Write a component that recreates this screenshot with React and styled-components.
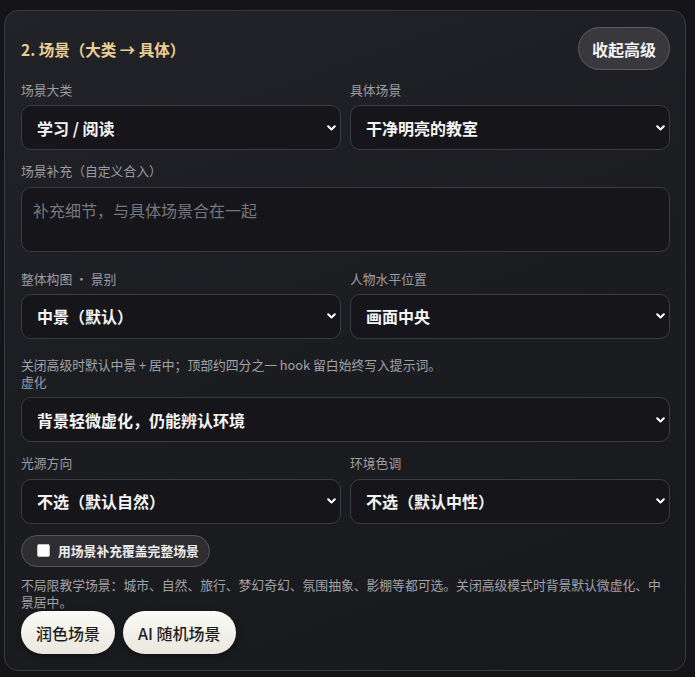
import React from "react"
import styled, { createGlobalStyle } from "styled-components"

const GlobalStyle = createGlobalStyle`
  html, body {
    margin: 0;
    background: #141419;
  }
  body {
    font-family: "Noto Sans CJK SC", "Noto Sans", sans-serif;
    color: #e8e8ea;
  }
`

const Panel = styled.section`
  box-sizing: border-box;
  width: 682px;
  margin: 10px 0 5px 4px;
  padding: 16px 15px 16px 16px;
  border: 1px solid #3a3a40;
  border-radius: 14px;
  background: linear-gradient(160deg, #222328 0%, #1c1d21 45%, #18191d 100%);
`

const Header = styled.div`
  display: flex;
  align-items: center;
  justify-content: space-between;
  height: 43px;
  margin-bottom: 11px;
`

const Title = styled.h2`
  margin: 0;
  font-size: 15.5px;
  font-weight: 700;
  color: #e9cf95;
`

const PillButton = styled.button`
  height: 43px;
  padding: 0 13px;
  border-radius: 22px;
  border: 1px solid #5b5b61;
  background: #38383d;
  color: #f2f2f2;
  font-family: inherit;
  font-size: 16px;
  font-weight: 700;
`

const Row = styled.div`
  display: grid;
  grid-template-columns: ${(p) => (p.$single ? "1fr" : "1fr 1fr")};
  gap: 9px;
  margin-bottom: ${(p) => p.$gap ?? 12}px;
`

const Field = styled.div`
  display: flex;
  flex-direction: column;
`

const Label = styled.label`
  font-size: 12.8px;
  line-height: 17.3px;
  color: #9c9ca2;
  margin-bottom: 7px;
`

const SelectWrap = styled.div`
  position: relative;
`

const Select = styled.select`
  display: block;
  box-sizing: border-box;
  width: 100%;
  height: 45px;
  padding: 0 30px 0 15px;
  appearance: none;
  border: 1px solid #3b3b41;
  border-radius: 10px;
  background: #15151a;
  color: #f4f4f4;
  font-family: inherit;
  font-size: 16px;
  font-weight: 700;
  outline: none;
`

const Chevron = styled.svg`
  position: absolute;
  right: 5px;
  top: 50%;
  width: 9px;
  height: 6px;
  margin-top: -3px;
  pointer-events: none;
`

const TextArea = styled.textarea`
  display: block;
  box-sizing: border-box;
  width: 100%;
  height: 65px;
  padding: 10px 11px;
  resize: none;
  border: 1px solid #3b3b41;
  border-radius: 10px;
  background: #15151a;
  color: #f4f4f4;
  font-family: inherit;
  font-size: 16px;
  outline: none;
  &::placeholder {
    color: #77777d;
  }
`

const Hint = styled.p`
  margin: ${(p) => p.$top ?? 0}px 0 ${(p) => p.$bottom ?? 0}px;
  font-size: 12.8px;
  line-height: 17.3px;
  color: #a2a2a8;
`

const CheckPill = styled.label`
  display: inline-flex;
  align-items: center;
  gap: 8px;
  height: 32px;
  box-sizing: border-box;
  padding: 0 10px 0 15px;
  border: 1px solid #55555b;
  border-radius: 16px;
  background: #2d2d32;
  font-size: 12.8px;
  font-weight: 700;
  color: #ededed;
`

const Box = styled.span`
  box-sizing: border-box;
  width: 13px;
  height: 13px;
  border-radius: 2px;
  background: #ffffff;
  border: 1px solid #c4c4c4;
`

const Actions = styled.div`
  display: flex;
  gap: 8px;
`

const LightButton = styled.button`
  height: 43px;
  padding: 0 15px;
  border: none;
  border-radius: 22px;
  background: linear-gradient(180deg, #fbfaf6 0%, #ebe7de 100%);
  box-shadow: 0 2px 6px rgba(0, 0, 0, 0.4);
  color: #1e1e20;
  font-family: inherit;
  font-size: 16px;
  font-weight: 500;
`

const DropDown = ({ value }) => (
  <SelectWrap>
    <Select defaultValue={value}>
      <option>{value}</option>
    </Select>
    <Chevron viewBox="0 0 9 6">
      <path d="M1.2 1.2 L4.5 4.5 L7.8 1.2" fill="none" stroke="#ffffff" strokeWidth="2" strokeLinecap="round" strokeLinejoin="round" />
    </Chevron>
  </SelectWrap>
)

const SelectField = ({ label, value }) => (
  <Field>
    <Label>{label}</Label>
    <DropDown value={value} />
  </Field>
)

const App = () => (
  <>
    <GlobalStyle />
    <Panel>
      <Header>
        <Title>2. 场景（大类 → 具体）</Title>
        <PillButton>收起高级</PillButton>
      </Header>

      <Row>
        <SelectField label="场景大类" value="学习 / 阅读" />
        <SelectField label="具体场景" value="干净明亮的教室" />
      </Row>

      <Row $single $gap={18}>
        <Field>
          <Label>场景补充（自定义合入）</Label>
          <TextArea placeholder="补充细节，与具体场景合在一起" />
        </Field>
      </Row>

      <Row $gap={17}>
        <SelectField label="整体构图 · 景别" value="中景（默认）" />
        <SelectField label="人物水平位置" value="画面中央" />
      </Row>

      <Hint>关闭高级时默认中景 + 居中；顶部约四分之一 hook 留白始终写入提示词。</Hint>

      <Row $single>
        <SelectField label="虚化" value="背景轻微虚化，仍能辨认环境" />
      </Row>

      <Row $gap={11}>
        <SelectField label="光源方向" value="不选（默认自然）" />
        <SelectField label="环境色调" value="不选（默认中性）" />
      </Row>

      <CheckPill>
        <Box />
        用场景补充覆盖完整场景
      </CheckPill>

      <Hint $top={9} $bottom={1}>
        不局限教学场景：城市、自然、旅行、梦幻奇幻、氛围抽象、影棚等都可选。关闭高级模式时背景默认微虚化、中景居中。
      </Hint>

      <Actions>
        <LightButton>润色场景</LightButton>
        <LightButton>AI 随机场景</LightButton>
      </Actions>
    </Panel>
  </>
)

export default App
